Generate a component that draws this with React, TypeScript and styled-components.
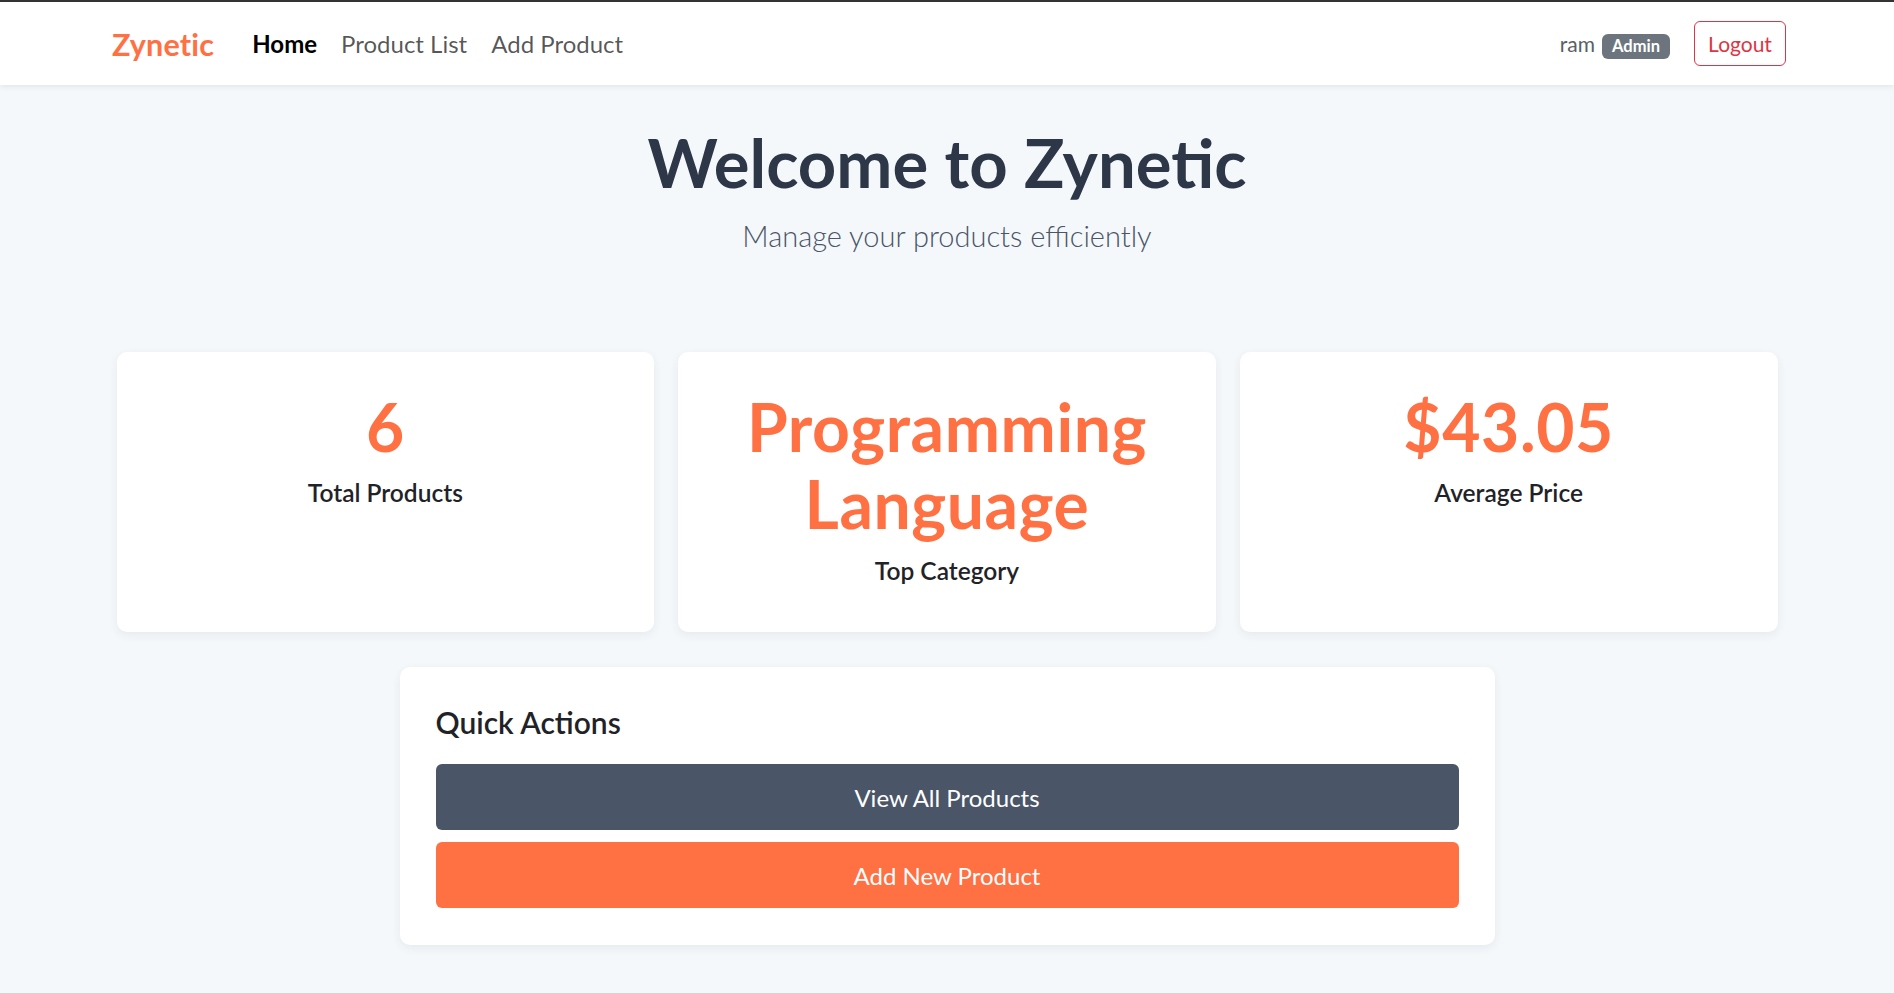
import React from "react";
import styled, { createGlobalStyle } from "styled-components";

const ORANGE = "#ff7043";

const GlobalStyle = createGlobalStyle`
  *, *::before, *::after { box-sizing: border-box; }
  html, body { margin: 0; padding: 0; }
  body {
    background: #f5f8fb;
    font-family: Lato, "Open Sans", "Noto Sans", sans-serif;
    color: #212529;
    min-height: 100vh;
  }
`;

const Navbar = styled.header`
  background: #ffffff;
  border-top: 2px solid #333333;
  height: 85px;
  box-shadow: 0 2px 6px rgba(0, 0, 0, 0.07);
  position: relative;
  z-index: 1;
`;

const NavInner = styled.nav`
  height: 100%;
  display: flex;
  align-items: center;
  justify-content: space-between;
  padding: 0 108px 0 112px;
`;

const LeftGroup = styled.div`
  display: flex;
  align-items: center;
`;

const Brand = styled.a`
  font-size: 30.5px;
  font-weight: 700;
  color: ${ORANGE};
  text-decoration: none;
  letter-spacing: 0.2px;
`;

const NavLinks = styled.ul`
  list-style: none;
  display: flex;
  align-items: center;
  margin: 0 0 0 26px;
  padding: 0;
`;

const NavLink = styled.a<{ $active?: boolean }>`
  display: block;
  padding: 0 12px;
  font-size: 24px;
  font-weight: ${(p) => (p.$active ? 700 : 400)};
  color: ${(p) => (p.$active ? "#000000" : "rgba(0, 0, 0, 0.66)")};
  text-decoration: none;
`;

const RightGroup = styled.div`
  display: flex;
  align-items: center;
`;

const UserName = styled.span`
  font-size: 21px;
  color: #5a5f66;
  margin-right: 7px;
`;

const RoleBadge = styled.span`
  display: inline-flex;
  align-items: center;
  height: 25px;
  margin-top: 5px;
  padding: 0 10px;
  border-radius: 6px;
  background: #6c757d;
  color: #ffffff;
  font-size: 16.5px;
  font-weight: 700;
`;

const LogoutButton = styled.button`
  margin-left: 24px;
  height: 45px;
  width: 92px;
  border: 1px solid #dc3545;
  border-radius: 6px;
  background: #ffffff;
  color: #dc3545;
  font-family: inherit;
  font-size: 21px;
  cursor: pointer;
`;

const Main = styled.main`
  padding: 37px 0 47px;
`;

const Hero = styled.section`
  text-align: center;
`;

const HeroTitle = styled.h1`
  margin: 0;
  font-size: 67px;
  line-height: 1.2;
  font-weight: 700;
  color: #2d3748;
`;

const HeroSubtitle = styled.p`
  margin: 17px 0 0;
  font-size: 29px;
  line-height: 1.2;
  font-weight: 300;
  color: #4a5568;
`;

const StatsGrid = styled.section`
  width: 1661px;
  margin: 98px auto 0;
  display: grid;
  grid-template-columns: repeat(3, 1fr);
  gap: 24px;
  align-items: stretch;
`;

const Card = styled.div`
  background: #ffffff;
  border-radius: 10px;
  box-shadow: 0 3px 10px rgba(30, 41, 59, 0.07);
`;

const StatCard = styled(Card)`
  padding: 36px;
  text-align: center;
`;

const StatValue = styled.div`
  font-size: 66px;
  line-height: 1.17;
  font-weight: 700;
  letter-spacing: 0.6px;
  color: ${ORANGE};
  margin-bottom: 13px;
`;

const StatLabel = styled.div`
  font-size: 24.5px;
  line-height: 1.2;
  font-weight: 600;
  color: #1f2328;
  margin-bottom: 11px;
`;

const ActionsCard = styled(Card)`
  width: 1095px;
  margin: 35px auto 0;
  padding: 37px 36px;
`;

const ActionsTitle = styled.h2`
  margin: 0 0 24px;
  font-size: 30px;
  line-height: 1.2;
  font-weight: 600;
  color: #1f2328;
`;

const ActionList = styled.div`
  display: flex;
  flex-direction: column;
  gap: 12px;
`;

const ActionButton = styled.button<{ $variant: "dark" | "orange" }>`
  display: block;
  width: 100%;
  height: 66px;
  border: none;
  border-radius: 6px;
  background: ${(p) => (p.$variant === "dark" ? "#4a5568" : ORANGE)};
  color: #ffffff;
  font-family: inherit;
  font-size: 24px;
  font-weight: 400;
  cursor: pointer;
`;

const stats = [
  { value: "6", label: "Total Products" },
  { value: "Programming Language", label: "Top Category" },
  { value: "$43.05", label: "Average Price" },
];

export default function App() {
  return (
    <>
      <GlobalStyle />
      <Navbar>
        <NavInner>
          <LeftGroup>
            <Brand href="#">Zynetic</Brand>
            <NavLinks>
              <li>
                <NavLink href="#" $active>
                  Home
                </NavLink>
              </li>
              <li>
                <NavLink href="#">Product List</NavLink>
              </li>
              <li>
                <NavLink href="#">Add Product</NavLink>
              </li>
            </NavLinks>
          </LeftGroup>
          <RightGroup>
            <UserName>ram</UserName>
            <RoleBadge>Admin</RoleBadge>
            <LogoutButton>Logout</LogoutButton>
          </RightGroup>
        </NavInner>
      </Navbar>
      <Main>
        <Hero>
          <HeroTitle>Welcome to Zynetic</HeroTitle>
          <HeroSubtitle>Manage your products efficiently</HeroSubtitle>
        </Hero>
        <StatsGrid>
          {stats.map((s) => (
            <StatCard key={s.label}>
              <StatValue>{s.value}</StatValue>
              <StatLabel>{s.label}</StatLabel>
            </StatCard>
          ))}
        </StatsGrid>
        <ActionsCard>
          <ActionsTitle>Quick Actions</ActionsTitle>
          <ActionList>
            <ActionButton $variant="dark">View All Products</ActionButton>
            <ActionButton $variant="orange">Add New Product</ActionButton>
          </ActionList>
        </ActionsCard>
      </Main>
    </>
  );
}
